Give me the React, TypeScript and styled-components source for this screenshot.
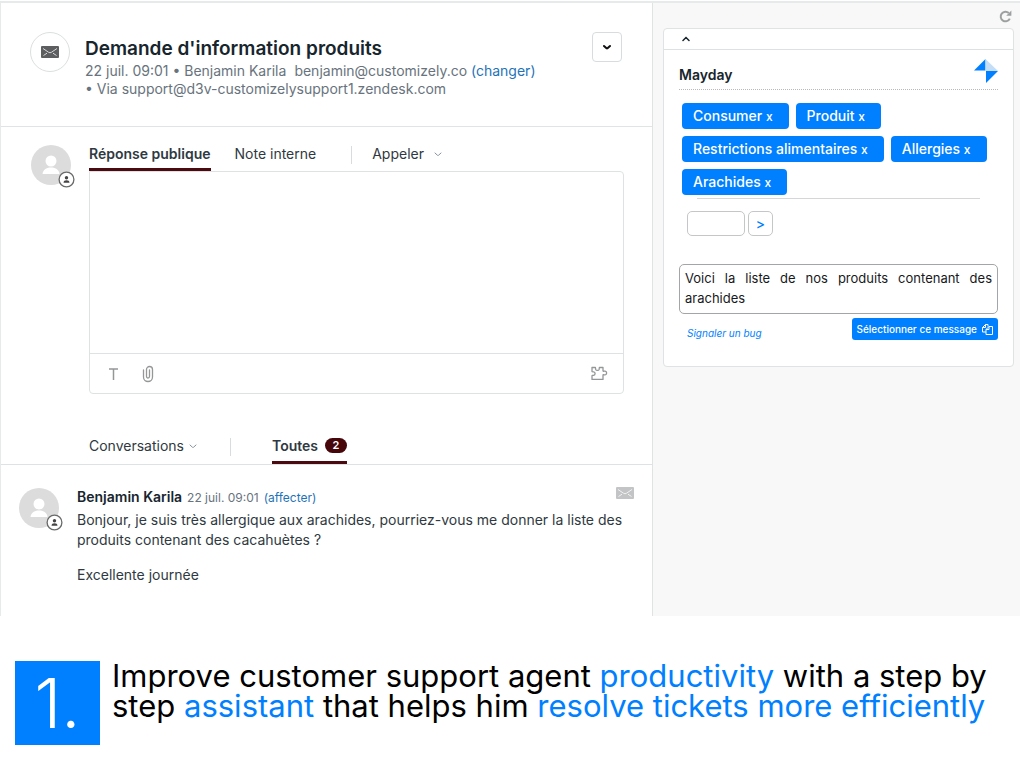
import React from 'react';
import styled, { createGlobalStyle } from 'styled-components';

const GlobalStyle = createGlobalStyle`
  *, *::before, *::after { box-sizing: border-box; }
  body {
    margin: 0;
    background: #fff;
    color: #2f3941;
    font-family: Inter, "Liberation Sans", sans-serif;
    font-size: 14px;
    line-height: 20px;
  }
  h1, h2, p { margin: 0; }
  button, input, textarea { font: inherit; color: inherit; margin: 0; }
  button { cursor: pointer; }
  a { color: #1f73b7; text-decoration: none; }
  svg { display: block; flex: none; }
`;

const Workspace = styled.div`
  display: grid;
  grid-template-columns: minmax(0, 652fr) minmax(0, 367fr);
  min-height: 615px;
  margin: 1px 4px 0 0;
  border-top: 2px solid #e6eaea;
  border-left: 1px solid #e6eaea;
`;

const Ticket = styled.main`
  border-right: 1px solid #dfe3e3;
`;

const TicketHeader = styled.header`
  display: flex;
  align-items: flex-start;
  gap: 15px;
  min-height: 124px;
  padding: 29px 30px 0 29px;
  border-bottom: 1px solid #dfe4e4;
`;

const ChannelBadge = styled.div`
  display: flex;
  align-items: center;
  justify-content: center;
  width: 40px;
  height: 40px;
  border: 1px solid #dcdfdf;
  border-radius: 50%;
`;

const TicketInfo = styled.div`
  flex: 1;
  padding-top: 4px;
`;

const TicketTitle = styled.h1`
  color: #17252d;
  font-size: 19px;
  font-weight: 600;
  line-height: 26px;
`;

const TicketMeta = styled.p`
  color: #68737d;
  line-height: 18px;
`;

const Sender = styled.span`
  margin-right: 8px;
`;

const MenuButton = styled.button`
  display: flex;
  align-items: center;
  justify-content: center;
  width: 30px;
  height: 30px;
  padding: 0;
  border: 1px solid #d8dcde;
  border-radius: 4px;
  background: #fff;
`;

const Composer = styled.section`
  display: flex;
  align-items: flex-start;
  gap: 18px;
  padding: 12px 28px 0 30px;
`;

const AvatarFrame = styled.div`
  position: relative;
  flex: none;
  width: 40px;
  height: 40px;
  margin-top: 6px;
`;

const AvatarRole = styled.span`
  position: absolute;
  right: -4px;
  bottom: -3px;
`;

const ComposerBody = styled.div`
  flex: 1;
`;

const TabRow = styled.div`
  display: flex;
  align-items: center;
  height: 32px;
`;

const Tab = styled.button<{ $active?: boolean; $gap?: number }>`
  display: flex;
  align-items: center;
  gap: ${(p) => p.$gap ?? 7}px;
  height: 100%;
  padding: 0;
  border: 0;
  border-bottom: 3px solid ${(p) => (p.$active ? '#4a0a10' : 'transparent')};
  background: none;
  font-weight: ${(p) => (p.$active ? 600 : 400)};
`;

const Divider = styled.span<{ $before: number; $after: number }>`
  width: 1px;
  height: 18px;
  margin: 0 ${(p) => p.$after}px 0 ${(p) => p.$before}px;
  background: #d8dcde;
`;

const Spacer = styled.span`
  width: 24px;
`;

const Editor = styled.div`
  border: 1px solid #dfe2e2;
  border-radius: 0 4px 4px 4px;
`;

const ReplyBox = styled.textarea`
  display: block;
  width: 100%;
  height: 181px;
  padding: 12px;
  border: 0;
  outline: 0;
  background: transparent;
  resize: none;
`;

const EditorTools = styled.div`
  display: flex;
  align-items: center;
  gap: 23px;
  height: 40px;
  padding: 0 15px 0 18px;
  border-top: 1px solid #dfe2e2;
`;

const ToolButton = styled.button<{ $end?: boolean }>`
  padding: 0;
  border: 0;
  background: none;
  color: #949698;
  margin-left: ${(p) => (p.$end ? 'auto' : '0')};
`;

const Filters = styled.div`
  display: flex;
  align-items: center;
  height: 35px;
  margin-top: 36px;
  padding-left: 88px;
  border-bottom: 1px solid #dde2e4;
`;

const Count = styled.span`
  width: 22px;
  border-radius: 8px;
  background: #46060a;
  color: #fff;
  font-size: 11px;
  line-height: 15px;
  text-align: center;
`;

const Message = styled.article`
  display: flex;
  align-items: flex-start;
  gap: 18px;
  padding: 17px 18px 12px 18px;
`;

const MessageBody = styled.div`
  flex: 1;
  padding-top: 5px;
`;

const MessageHead = styled.div`
  display: flex;
  align-items: baseline;
  gap: 5px;
  margin-bottom: 2px;
  color: #68737d;
  font-size: 12px;

  & > svg { align-self: flex-start; margin-left: auto; }
`;

const Author = styled.strong`
  color: #17252d;
  font-size: 14px;
  font-weight: 600;
`;

const Paragraph = styled.p`
  margin-bottom: 15px;
`;

const Sidebar = styled.aside`
  padding: 7px 6px 0 10px;
  background: #f8f8f8;
`;

const RefreshButton = styled.button`
  display: block;
  margin: 0 2px 5px auto;
  padding: 0;
  border: 0;
  background: none;
  color: #9da0a1;
`;

const AppCard = styled.section`
  border: 1px solid #dfe3e3;
  border-radius: 4px;
  background: #fff;
`;

const CollapseButton = styled.button`
  display: block;
  width: 100%;
  height: 21px;
  padding: 0 0 0 18px;
  border: 0;
  border-bottom: 1px solid #dce2e2;
  background: none;
`;

const AppBody = styled.div`
  padding: 9px 15px 23px;
`;

const AppHeader = styled.div`
  display: flex;
  justify-content: space-between;
  height: 31px;
  border-bottom: 1px dotted #b7b9ba;
`;

const AppName = styled.h2`
  color: #17252d;
  font-size: 14px;
  font-weight: 600;
  line-height: 31px;
`;

const TagList = styled.div`
  display: flex;
  flex-wrap: wrap;
  gap: 7px;
  padding: 13px 3px 3px;
`;

const Tag = styled.button`
  height: 26px;
  padding: 0 16px 0 11px;
  border: 0;
  border-radius: 4px;
  background: #007fff;
  color: #fff;
  font-weight: 500;
  white-space: nowrap;
`;

const TagClose = styled.span`
  font-size: 12px;
`;

const Separator = styled.hr`
  height: 1px;
  margin: 0 18px;
  border: 0;
  background: #d4d6d7;
`;

const SearchForm = styled.form`
  display: flex;
  gap: 3px;
  margin: 12px 8px 28px;
`;

const SearchInput = styled.input`
  width: 58px;
  height: 25px;
  border: 1px solid #c4c6c7;
  border-radius: 5px;
  background: #fff;
`;

const SearchButton = styled.button`
  width: 25px;
  height: 25px;
  padding: 0;
  border: 1px solid #c4c6c7;
  border-radius: 5px;
  background: #fff;
  color: #007fff;
  font-weight: 500;
`;

const Suggestion = styled.textarea`
  display: block;
  width: 100%;
  height: 50px;
  padding: 3px 5px;
  border: 1px solid #a3a6a8;
  border-radius: 5px;
  outline: 0;
  color: #17191b;
  font-size: 13px;
  line-height: 20px;
  text-align: justify;
  resize: none;
  overflow: hidden;
`;

const AppFooter = styled.div`
  display: flex;
  align-items: flex-start;
  justify-content: space-between;
  margin-top: 4px;
  padding-left: 8px;
  font-size: 10px;
`;

const BugLink = styled.a`
  padding-top: 5px;
  color: #007fff;
  font-style: italic;
`;

const SelectButton = styled.button`
  display: flex;
  align-items: center;
  gap: 5px;
  height: 22px;
  padding: 0 5px;
  border: 0;
  border-radius: 3px;
  background: #007fff;
  color: #fff;
  font-weight: 500;
  white-space: nowrap;
`;

const Caption = styled.section`
  display: flex;
  align-items: flex-start;
  gap: 12px;
  padding: 45px 5px 23px 15px;
`;

const StepNumber = styled.div`
  flex: none;
  width: 85px;
  height: 84px;
  background: #007fff;
  color: #fff;
  font-size: 68px;
  font-weight: 300;
  line-height: 84px;
  text-align: center;
`;

const CaptionText = styled.p`
  color: #000;
  font-size: 31px;
  line-height: 30px;
`;

const Accent = styled.span`
  color: #007fff;
`;

const Envelope = ({ color, line }: { color: string; line: string }) => (
  <svg width="18" height="12" viewBox="0 0 18 12" aria-hidden="true">
    <rect width="18" height="12" rx="1" fill={color} />
    <path d="M2 2.500l5.600 3.800q1.400.9 2.800 0L16 2.500M2.500 9.500l3.500-2.300M15.500 9.500l-3.500-2.300" fill="none" stroke={line} strokeWidth="1" />
  </svg>
);

const Chevron = ({ up, color, weight = 1 }: { up?: boolean; color: string; weight?: number }) => (
  <svg width="8" height="8" viewBox="0 0 8 8" aria-hidden="true">
    <path d={up ? 'M1 5.500L4 2.500L7 5.500' : 'M1 3L3.500 5.300Q4 5.700 4.500 5.300L7 3'} fill="none" stroke={color} strokeWidth={weight} strokeLinecap="round" />
  </svg>
);

const Avatar = () => (
  <AvatarFrame>
    <svg width="40" height="40" viewBox="0 0 40 40" aria-hidden="true">
      <circle cx="20" cy="20" r="20" fill="#dcdcdc" />
      <circle cx="20" cy="16" r="5.500" fill="#fff" />
      <path d="M11.500 29c.5-4 3.500-6.500 8.500-6.500s8 2.500 8.500 6.500z" fill="#fff" />
    </svg>
    <AvatarRole>
      <svg width="17" height="17" viewBox="0 0 17 17" aria-hidden="true">
        <circle cx="8.500" cy="8.500" r="7.400" fill="#fff" stroke="#68696a" strokeWidth="1.300" />
        <circle cx="8.500" cy="6.700" r="1.700" fill="#444" />
        <path d="M5.500 11.700c.2-1.700 1.100-2.400 3-2.400s2.800.7 3 2.400z" fill="#444" />
      </svg>
    </AvatarRole>
  </AvatarFrame>
);

const Clip = () => (
  <svg width="12" height="18" viewBox="0 0 12 18" fill="none" stroke="currentColor" strokeWidth="1.300" strokeLinecap="round" aria-hidden="true">
    <path d="M7.500 5v6.500a1.500 1.500 0 0 1-3 0V4.500a3 3 0 0 1 6 0V12a4.500 4.500 0 0 1-9 0V5" />
  </svg>
);

const Puzzle = () => (
  <svg width="17" height="15" viewBox="0 0 17 15" fill="none" stroke="currentColor" strokeWidth="1.300" strokeLinejoin="round" aria-hidden="true">
    <path d="M1 1.500h3.200c.6 0 .2 1 .5 1.900.5 1.300 2.900 1.300 3.400 0 .3-.9-.1-1.900.5-1.900h3.400v3.300c0 .7.900.4 1.700.3 2.500-.2 2.500 4 0 3.800-.8-.1-1.700-.4-1.700.3v4.200H1V9.800c0-.7.900-.4 1.600-.5 2-.3 2-3.200 0-3.500C1.900 5.700 1 6 1 5.300z" />
  </svg>
);

const Refresh = () => (
  <svg width="13" height="13" viewBox="0 0 13 13" fill="none" aria-hidden="true">
    <path d="M10.800 8.600A4.800 4.800 0 1 1 9.800 3" stroke="currentColor" strokeWidth="2" />
    <path d="M12.400.6v5.200H7.200z" fill="currentColor" />
  </svg>
);

const Logo = () => (
  <svg width="24" height="24" viewBox="0 0 24 24" aria-hidden="true">
    <path d="M0 11.500L11.500 0v11.500z" fill="#007fff" />
    <path d="M11.500 0L24 12H11.500z" fill="#c6def5" />
    <path d="M12 12h12L12 24z" fill="#007fff" />
  </svg>
);

const Copy = () => (
  <svg width="11" height="11" viewBox="0 0 11 11" fill="none" stroke="currentColor" strokeWidth="1" strokeLinejoin="round" aria-hidden="true">
    <path d="M4 8H.5V3.500L3.500.5H6v2M3.500.5v3h-3" />
    <path d="M4 5.500L7 2.500h3.500v8H4zM7 2.500v3H4" />
  </svg>
);

const tags = ['Consumer', 'Produit', 'Restrictions alimentaires', 'Allergies', 'Arachides'];

export default function App() {
  return (
    <>
      <GlobalStyle />
      <Workspace>
        <Ticket>
          <TicketHeader>
            <ChannelBadge><Envelope color="#5c5e5f" line="#d8d8d8" /></ChannelBadge>
            <TicketInfo>
              <TicketTitle>Demande d'information produits</TicketTitle>
              <TicketMeta>
                <Sender>22 juil. 09:01 • Benjamin Karila</Sender>
                benjamin@customizely.co <a href="#changer">(changer)</a>
              </TicketMeta>
              <TicketMeta>• Via support@d3v-customizelysupport1.zendesk.com</TicketMeta>
            </TicketInfo>
            <MenuButton aria-label="Options du ticket"><Chevron color="#111" weight={2} /></MenuButton>
          </TicketHeader>

          <Composer>
            <Avatar />
            <ComposerBody>
              <TabRow>
                <Tab $active>Réponse publique</Tab>
                <Spacer />
                <Tab>Note interne</Tab>
                <Divider $before={35} $after={20} />
                <Tab $gap={10}>Appeler <Chevron color="#87929d" /></Tab>
              </TabRow>
              <Editor>
                <ReplyBox aria-label="Réponse publique" />
                <EditorTools>
                  <ToolButton aria-label="Mise en forme">
                    <svg width="11" height="12" viewBox="0 0 11 12" fill="none" stroke="currentColor" strokeWidth="1.500" aria-hidden="true">
                      <path d="M1 1h9M5.500 1v11" />
                    </svg>
                  </ToolButton>
                  <ToolButton aria-label="Joindre un fichier"><Clip /></ToolButton>
                  <ToolButton $end aria-label="Applications"><Puzzle /></ToolButton>
                </EditorTools>
              </Editor>
            </ComposerBody>
          </Composer>

          <Filters>
            <Tab $gap={5}>Conversations <Chevron color="#87929d" /></Tab>
            <Divider $before={33} $after={41} />
            <Tab $active>Toutes <Count>2</Count></Tab>
          </Filters>

          <Message>
            <Avatar />
            <MessageBody>
              <MessageHead>
                <Author>Benjamin Karila</Author>
                <span>22 juil. 09:01</span>
                <a href="#affecter">(affecter)</a>
                <Envelope color="#c3c4c5" line="#f2f2f2" />
              </MessageHead>
              <Paragraph>
                Bonjour, je suis très allergique aux arachides, pourriez-vous me donner la liste des produits contenant des cacahuètes ?
              </Paragraph>
              <Paragraph>Excellente journée</Paragraph>
            </MessageBody>
          </Message>
        </Ticket>

        <Sidebar>
          <RefreshButton aria-label="Actualiser"><Refresh /></RefreshButton>
          <AppCard>
            <CollapseButton aria-label="Réduire"><Chevron up color="#17252d" weight={1.5} /></CollapseButton>
            <AppBody>
              <AppHeader>
                <AppName>Mayday</AppName>
                <Logo />
              </AppHeader>
              <TagList>
                {tags.map((tag) => (
                  <Tag key={tag}>{tag} <TagClose>x</TagClose></Tag>
                ))}
              </TagList>
              <Separator />
              <SearchForm onSubmit={(e) => e.preventDefault()}>
                <SearchInput aria-label="Ajouter un mot-clé" />
                <SearchButton>&gt;</SearchButton>
              </SearchForm>
              <Suggestion
                aria-label="Message proposé"
                readOnly
                value="Voici la liste de nos produits contenant des arachides"
              />
              <AppFooter>
                <BugLink href="#bug">Signaler un bug</BugLink>
                <SelectButton>Sélectionner ce message <Copy /></SelectButton>
              </AppFooter>
            </AppBody>
          </AppCard>
        </Sidebar>
      </Workspace>

      <Caption>
        <StepNumber>1.</StepNumber>
        <CaptionText>
          Improve customer support agent <Accent>productivity</Accent> with a step by
          step <Accent>assistant</Accent> that helps him <Accent>resolve tickets more efficiently</Accent>
        </CaptionText>
      </Caption>
    </>
  );
}
